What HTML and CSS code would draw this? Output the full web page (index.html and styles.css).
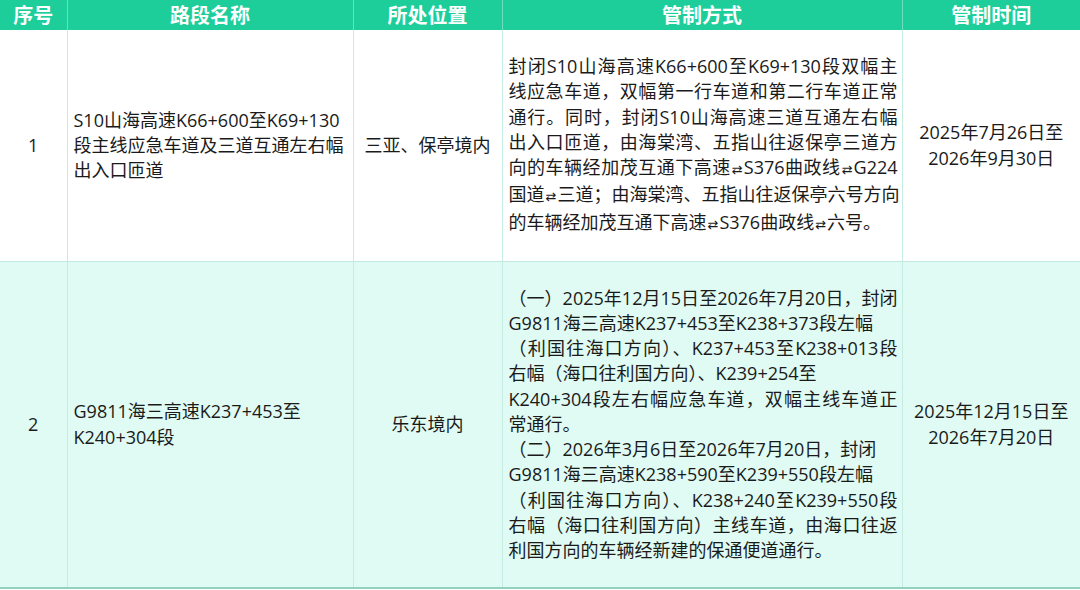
FILE: index.html
```html
<!DOCTYPE html>
<html lang="zh-CN">
<head>
<meta charset="utf-8">
<title>管制信息</title>
<link rel="stylesheet" href="styles.css">
</head>
<body>
<table class="tbl">
  <colgroup>
    <col class="c1"><col class="c2"><col class="c3"><col class="c4"><col class="c5">
  </colgroup>
  <thead>
    <tr class="head">
      <th>序号</th>
      <th>路段名称</th>
      <th>所处位置</th>
      <th>管制方式</th>
      <th>管制时间</th>
    </tr>
  </thead>
  <tbody>
    <tr class="r1">
      <td class="ctr">1</td>
      <td class="lft">S10山海高速K66+600至K69+130<br>段主线应急车道及三道互通左右幅<br>出入口匝道</td>
      <td class="ctr">三亚、保亭境内</td>
      <td class="way">
        <span class="ln j">封闭S10山海高速K66+600至K69+130段双幅主</span>
        <span class="ln j">线应急车道，双幅第一行车道和第二行车道正常</span>
        <span class="ln j">通行。同时，封闭S10山海高速三道互通左右幅</span>
        <span class="ln j">出入口匝道，由海棠湾、五指山往返保亭三道方</span>
        <span class="ln j">向的车辆经加茂互通下高速<span class="arr">⇄</span>S376曲政线<span class="arr">⇄</span>G224</span>
        <span class="ln j">国道<span class="arr">⇄</span>三道；由海棠湾、五指山往返保亭六号方向</span>
        <span class="ln">的车辆经加茂互通下高速<span class="arr">⇄</span>S376曲政线<span class="arr">⇄</span>六号。</span>
      </td>
      <td class="ctr">2025年7月26日至<br>2026年9月30日</td>
    </tr>
    <tr class="r2">
      <td class="ctr">2</td>
      <td class="lft">G9811海三高速K237+453至<br>K240+304段</td>
      <td class="ctr">乐东境内</td>
      <td class="way">
        <span class="ln j">（一）2025年12月15日至2026年7月20日，封闭</span>
        <span class="ln">G9811海三高速K237+453至K238+373段左幅</span>
        <span class="ln j">（利国往海口方向）、K237+453至K238+013段</span>
        <span class="ln">右幅（海口往利国方向）、K239+254至</span>
        <span class="ln j">K240+304段左右幅应急车道，双幅主线车道正</span>
        <span class="ln">常通行。</span>
        <span class="ln">（二）2026年3月6日至2026年7月20日，封闭</span>
        <span class="ln">G9811海三高速K238+590至K239+550段左幅</span>
        <span class="ln j">（利国往海口方向）、K238+240至K239+550段</span>
        <span class="ln j">右幅（海口往利国方向）主线车道，由海口往返</span>
        <span class="ln">利国方向的车辆经新建的保通便道通行。</span>
      </td>
      <td class="ctr">2025年12月15日至<br>2026年7月20日</td>
    </tr>
  </tbody>
</table>
</body>
</html>
```

FILE: styles.css
```css
html, body {
  margin: 0;
  padding: 0;
  background: #ffffff;
}

body {
  font-family: "Open Sans", "Noto Sans CJK SC", sans-serif;
  color: #1a1a1a;
  width: 1080px;
  height: 590px;
  overflow: hidden;
}

.tbl {
  width: 1080px;
  border-collapse: collapse;
  table-layout: fixed;
}

.c1 { width: 67px; }
.c2 { width: 286px; }
.c3 { width: 149px; }
.c4 { width: 400px; }
.c5 { width: 178px; }

.head th {
  height: 30px;
  padding: 0;
  background: #1dce9a;
  color: #ffffff;
  font-family: "Noto Sans CJK SC", sans-serif;
  font-size: 20px;
  font-weight: 700;
  line-height: 30px;
  text-align: center;
  border-left: 1px solid #6fdcbb;
}

.head th:first-child {
  border-left: none;
}

td {
  font-size: 18px;
  line-height: 25.2px;
  padding: 0 6px;
  vertical-align: middle;
  border-left: 1px solid #c4ece2;
  white-space: nowrap;
}

td:first-child {
  border-left: none;
}

.r1 td {
  height: 231px;
  background: #ffffff;
  border-bottom: 1px solid #c2e9de;
}

.r2 td {
  height: 325px;
  background: #e0fbf3;
  border-bottom: 2px solid #92d0bf;
}

.ctr {
  text-align: center;
}

.lft {
  text-align: left;
}

.way {
  padding: 0 4px 0 6px;
}

.ln {
  display: block;
  text-align: left;
}

.ln.j {
  text-align: justify;
  text-align-last: justify;
}

.arr {
  font-family: "DejaVu Sans", sans-serif;
  font-size: 13px;
  margin: 0 1px;
}
```
